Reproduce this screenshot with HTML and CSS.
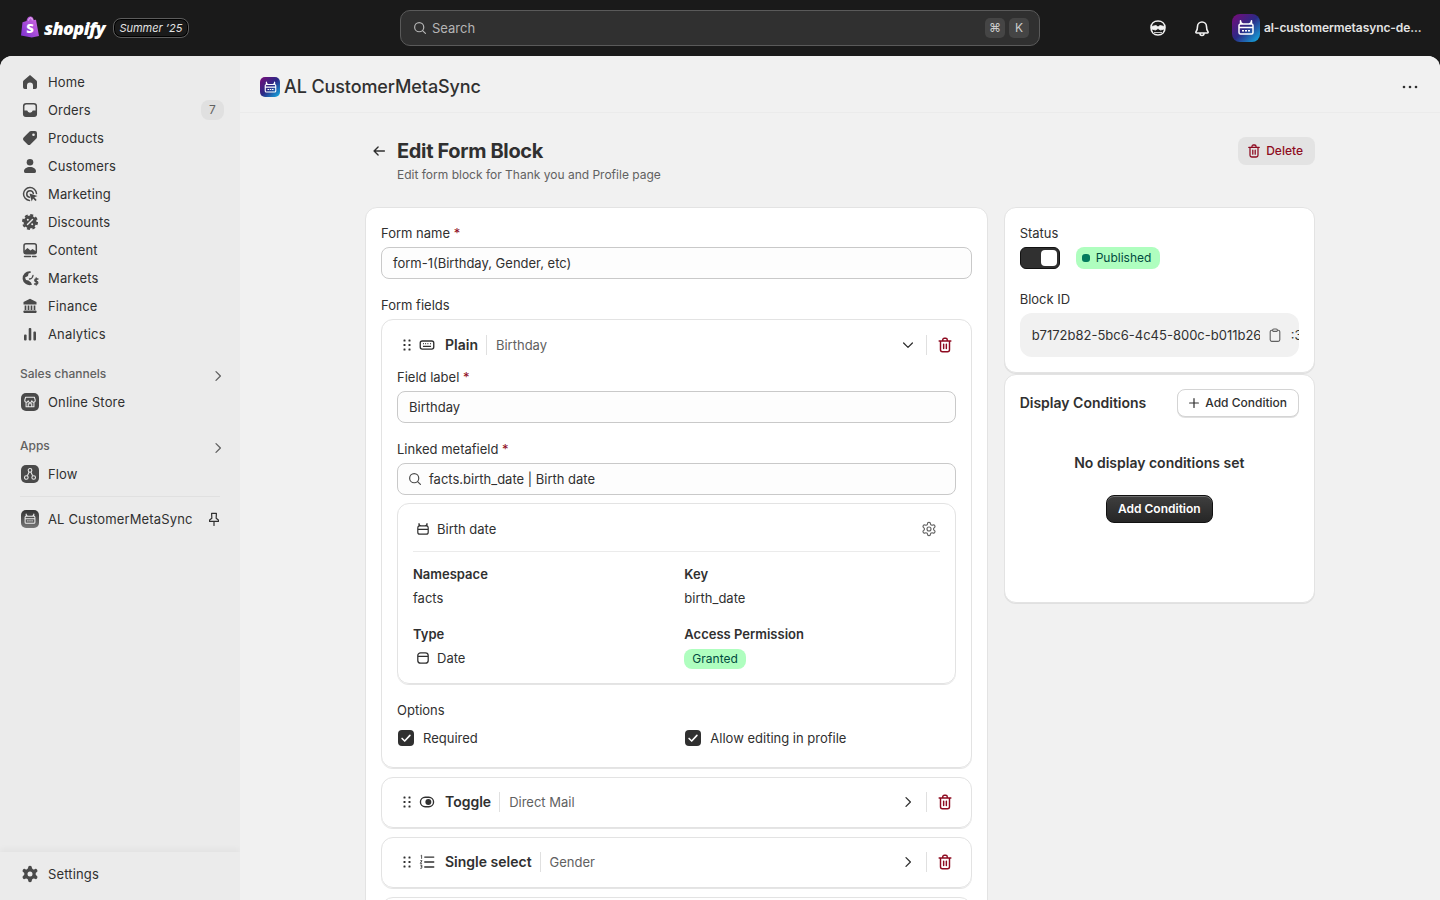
FILE: index.html
```html
<!DOCTYPE html>
<html lang="en">

<head>
    <meta charset="UTF-8">
    <meta name="viewport" content="width=device-width, initial-scale=1.0">
    <title>AL CustomerMetaSync - Edit Form Block</title>
    <link rel="stylesheet" href="styles.css">
</head>

<body>
    <!-- shared icons -->
    <svg class="icon-defs" xmlns="http://www.w3.org/2000/svg">
        <symbol id="i-trash" viewBox="0 0 20 20">
            <path d="M3.500 5.500h13M7.500 5.500V4.200A1.700 1.700 0 0 1 9.200 2.500h1.600a1.700 1.700 0 0 1 1.700 1.700v1.300M5 5.500v9.800A2.200 2.200 0 0 0 7.200 17.500h5.600a2.200 2.200 0 0 0 2.200-2.200V5.500M8.500 9v5M11.500 9v5" fill="none" stroke="currentColor" stroke-width="1.600" stroke-linecap="round" stroke-linejoin="round" />
        </symbol>
        <symbol id="i-grip" viewBox="0 0 10 14">
            <g fill="currentColor">
                <rect x="1.500" y="1.500" width="2" height="2" rx=".5" /><rect x="6.500" y="1.500" width="2" height="2" rx=".5" />
                <rect x="1.500" y="6" width="2" height="2" rx=".5" /><rect x="6.500" y="6" width="2" height="2" rx=".5" />
                <rect x="1.500" y="10.500" width="2" height="2" rx=".5" /><rect x="6.500" y="10.500" width="2" height="2" rx=".5" />
            </g>
        </symbol>
        <symbol id="i-right" viewBox="0 0 20 20">
            <path d="M7.500 4.500 13 10l-5.500 5.500" fill="none" stroke="currentColor" stroke-width="1.600" stroke-linecap="round" stroke-linejoin="round" />
        </symbol>
        <symbol id="i-search" viewBox="0 0 20 20">
            <circle cx="9" cy="9" r="5.700" fill="none" stroke="currentColor" stroke-width="1.500" />
            <path d="m13.200 13.200 3.600 3.600" fill="none" stroke="currentColor" stroke-width="1.500" stroke-linecap="round" />
        </symbol>
        <symbol id="i-date" viewBox="0 0 20 20">
            <path d="M7 3.500h6a3.500 3.500 0 0 1 3.500 3.500v6a3.500 3.500 0 0 1-3.500 3.500H7A3.500 3.500 0 0 1 3.500 13V7A3.500 3.500 0 0 1 7 3.500zM3.500 8h13" fill="none" stroke="currentColor" stroke-width="1.600" />
        </symbol>
        <symbol id="i-birth" viewBox="0 0 20 20">
            <path d="M5 3.200v2.300c0 .3.200.5.500.5h9c.3 0 .5-.2.500-.5V3.200c0 1.800-1.200 2.800-2.500 2.800h-5C6.200 6 5 5 5 3.200zM5.500 6h9a2.500 2.500 0 0 1 2 2.500v5.500a2.500 2.500 0 0 1-2.500 2.500H6A2.500 2.500 0 0 1 3.500 14V8.500A2.500 2.500 0 0 1 5.500 6zM3.500 10.500h13" fill="none" stroke="currentColor" stroke-width="1.500" stroke-linejoin="round" />
        </symbol>
        <symbol id="i-appcal" viewBox="0 0 20 20">
            <path d="M4.500 2.800V5c0 .6.400 1 1 1h9c.6 0 1-.4 1-1V2.800c0 1.900-1.200 3.200-2.700 3.200H7.200C5.700 6 4.500 4.700 4.500 2.800zM4.500 6h11A1.500 1.500 0 0 1 17 7.500v7a1.500 1.500 0 0 1-1.500 1.500h-11A1.500 1.500 0 0 1 3 14.500v-7A1.500 1.500 0 0 1 4.500 6zM3 9.500h14" fill="none" stroke="currentColor" stroke-width="1.500" stroke-linejoin="round" />
            <path d="M6 12.700h8" fill="none" stroke="currentColor" stroke-width="1.400" stroke-dasharray="2 1" />
        </symbol>
        <symbol id="i-gear" viewBox="0 0 24 24">
            <path d="M12.220 2h-.44a2 2 0 0 0-2 2v.18a2 2 0 0 1-1 1.730l-.43.25a2 2 0 0 1-2 0l-.15-.08a2 2 0 0 0-2.730.73l-.22.38a2 2 0 0 0 .73 2.730l.15.1a2 2 0 0 1 1 1.720v.51a2 2 0 0 1-1 1.740l-.15.09a2 2 0 0 0-.73 2.730l.22.38a2 2 0 0 0 2.730.73l.15-.08a2 2 0 0 1 2 0l.43.25a2 2 0 0 1 1 1.730V20a2 2 0 0 0 2 2h.44a2 2 0 0 0 2-2v-.18a2 2 0 0 1 1-1.730l.43-.25a2 2 0 0 1 2 0l.15.08a2 2 0 0 0 2.730-.73l.22-.39a2 2 0 0 0-.73-2.730l-.15-.08a2 2 0 0 1-1-1.740v-.5a2 2 0 0 1 1-1.740l.15-.09a2 2 0 0 0 .73-2.730l-.22-.38a2 2 0 0 0-2.730-.73l-.15.08a2 2 0 0 1-2 0l-.43-.25a2 2 0 0 1-1-1.730V4a2 2 0 0 0-2-2z" fill="none" stroke="currentColor" stroke-width="1.700" />
            <circle cx="12" cy="12" r="3" fill="none" stroke="currentColor" stroke-width="1.700" />
        </symbol>
    </svg>

    <header class="topbar">
        <div class="brand">
            <svg class="bag" viewBox="0 0 20 22" width="20" height="23">
                <defs>
                    <linearGradient id="bagfill" x1="0" y1="1" x2="1" y2="0">
                        <stop offset="0" stop-color="#7b2fd0" />
                        <stop offset="1" stop-color="#d66be0" />
                    </linearGradient>
                </defs>
                <path d="M6.500 5.500C6.800 3 8.300 1 10.500 1c1.800 0 3 1.600 3.300 3.500L16 4.200 19 20.500 11.800 22 1 20l1.500-13.300z" fill="url(#bagfill)" />
                <path d="M8.500 5.200C8.800 3.500 9.500 2.300 10.600 2.300c1 0 1.600 1.100 1.700 2.500" fill="none" stroke="#fff" stroke-width=".9" opacity=".7" />
                <text x="10" y="17.500" class="bag-s">S</text>
            </svg>
            <span class="wordmark">shopify</span>
            <span class="edition">Summer ’25</span>
        </div>
        <div class="search">
            <svg class="ic16" width="16" height="16"><use href="#i-search" /></svg>
            <span class="search-text">Search</span>
            <span class="kbd">⌘</span>
            <span class="kbd">K</span>
        </div>
        <div class="top-right">
            <svg class="top-icon" viewBox="0 0 20 20" width="20" height="20">
                <path d="M10 3c4 0 7 2.500 7 6.500 0 4.500-2.800 7.500-7 7.500s-7-3-7-7.500C3 5.500 6 3 10 3z" fill="none" stroke="currentColor" stroke-width="1.600" />
                <path d="M3.500 8.500 8 7.500l2 1.500 2-1.500 4.500 1v2.500l-4 1-2.500-1.500L7.500 12l-4-1zM6 14.500h8" fill="currentColor" stroke="currentColor" stroke-width=".8" />
            </svg>
            <svg class="top-icon bell" viewBox="0 0 20 20" width="20" height="20">
                <path d="M5.500 8.500a4.500 4.500 0 0 1 9 0c0 3 .6 4.200 1.500 5.200.4.500.1 1.300-.6 1.300H4.600c-.7 0-1-.8-.6-1.300.9-1 1.500-2.200 1.500-5.200zM8 15.500a2 2 0 0 0 4 0" fill="none" stroke="currentColor" stroke-width="1.600" stroke-linejoin="round" />
            </svg>
            <span class="app-tile tile-28"><svg width="20" height="20"><use href="#i-appcal" /></svg></span>
            <span class="shop-name">al-customermetasync-de...</span>
        </div>
    </header>

    <div class="frame">
        <nav class="sidebar">
            <div class="nav-scroll">
                <a class="nav-item">
                    <svg class="nav-icon" viewBox="0 0 20 20"><path d="M10 3 3.600 8.400A1.800 1.800 0 0 0 3 9.800v5.400A1.800 1.800 0 0 0 4.800 17H7v-3.500a3 3 0 0 1 6 0V17h2.200a1.800 1.800 0 0 0 1.800-1.800V9.800a1.800 1.800 0 0 0-.6-1.400z" fill="currentColor" /></svg>
                    Home
                </a>
                <a class="nav-item">
                    <svg class="nav-icon" viewBox="0 0 20 20"><rect x="3.700" y="3.700" width="12.600" height="12.600" rx="2.500" fill="none" stroke="currentColor" stroke-width="1.500" /><path d="M3.500 10.500h3.700a2.900 2.900 0 0 0 5.600 0h3.700V14a2.500 2.500 0 0 1-2.500 2.500H6A2.500 2.500 0 0 1 3.500 14z" fill="currentColor" /></svg>
                    Orders
                    <span class="count">7</span>
                </a>
                <a class="nav-item">
                    <svg class="nav-icon" viewBox="0 0 20 20"><path fill-rule="evenodd" d="M11 3h4a2 2 0 0 1 2 2v4a2 2 0 0 1-.6 1.400l-6 6a2 2 0 0 1-2.800 0l-4-4a2 2 0 0 1 0-2.800l6-6A2 2 0 0 1 11 3zm2.500 5a1.300 1.300 0 1 0 0-2.600 1.300 1.300 0 0 0 0 2.600z" fill="currentColor" /></svg>
                    Products
                </a>
                <a class="nav-item">
                    <svg class="nav-icon" viewBox="0 0 20 20"><circle cx="10" cy="6.300" r="3.300" fill="currentColor" /><path d="M4 15.300c0-2.700 2.600-4.300 6-4.300s6 1.600 6 4.300A1.500 1.500 0 0 1 14.500 17h-9A1.500 1.500 0 0 1 4 15.300z" fill="currentColor" /></svg>
                    Customers
                </a>
                <a class="nav-item">
                    <svg class="nav-icon" viewBox="0 0 20 20"><path d="M16.500 9.500a6.500 6.500 0 1 0-7 7M13.300 9.500a3.300 3.300 0 1 0-3.800 3.700" fill="none" stroke="currentColor" stroke-width="1.500" stroke-linecap="round" /><path d="m9.500 9.500 8 2.500-3.200 1.300 2.400 2.600-1.300 1.200-2.400-2.600-1.300 3z" fill="currentColor" /></svg>
                    Marketing
                </a>
                <a class="nav-item">
                    <svg class="nav-icon" viewBox="0 0 20 20"><circle cx="10" cy="10" r="6.500" fill="currentColor" /><circle cx="10" cy="10" r="7" fill="none" stroke="currentColor" stroke-width="2" stroke-dasharray="3 2.500" /><path d="m12.500 7.500-5 5" stroke="#ebebeb" stroke-width="1.400" stroke-linecap="round" /><circle cx="7.800" cy="7.800" r="1" fill="#ebebeb" /><circle cx="12.200" cy="12.200" r="1" fill="#ebebeb" /></svg>
                    Discounts
                </a>
                <a class="nav-item">
                    <svg class="nav-icon" viewBox="0 0 20 20"><rect x="4" y="3.700" width="12.300" height="10" rx="2" fill="none" stroke="currentColor" stroke-width="1.500" /><path d="M4 11l3.500-3 3 2.500 2-1.500 3.800 2.500v.5a1.700 1.700 0 0 1-1.700 1.700H5.700A1.700 1.700 0 0 1 4 12z" fill="currentColor" /><path d="M4.500 16.500h6M12.500 16.500h3.500" stroke="currentColor" stroke-width="1.400" stroke-linecap="round" /></svg>
                    Content
                </a>
                <a class="nav-item">
                    <svg class="nav-icon" viewBox="0 0 20 20"><path d="M10.500 3.200A7 7 0 1 0 12 16.700L11 14.500l-2.500-2-2.500-.5-1-2.500 3-1.500.5-2.500 2.500-1z" fill="currentColor" /><path d="M13 7.500A4 4 0 0 1 9.500 11M18 11h-2a1.200 1.200 0 0 0 0 2.500h.6a1.200 1.200 0 0 1 0 2.500H14.500M16.200 9.800v7.300" fill="none" stroke="currentColor" stroke-width="1.300" stroke-linecap="round" /></svg>
                    Markets
                </a>
                <a class="nav-item">
                    <svg class="nav-icon" viewBox="0 0 20 20"><path d="M10 2.800 3.500 6v2.500h13V6z" fill="currentColor" /><path d="M5.500 9.500v4.500M8.500 9.500v4.500M11.500 9.500v4.500M14.500 9.500v4.500" stroke="currentColor" stroke-width="1.700" /><rect x="3.500" y="14.500" width="13" height="2.500" rx=".7" fill="currentColor" /></svg>
                    Finance
                </a>
                <a class="nav-item">
                    <svg class="nav-icon" viewBox="0 0 20 20"><rect x="4" y="10.500" width="2.600" height="6" rx="1" fill="currentColor" /><rect x="8.700" y="4" width="2.600" height="12.500" rx="1" fill="currentColor" /><rect x="13.400" y="7.500" width="2.600" height="9" rx="1" fill="currentColor" /></svg>
                    Analytics
                </a>

                <div class="nav-section first">
                    <span>Sales channels</span>
                    <svg class="section-arrow" width="16" height="16"><use href="#i-right" /></svg>
                </div>
                <a class="nav-item">
                    <span class="app-square">
                        <svg viewBox="0 0 16 16" width="14" height="14"><path d="M3 2.500h10l1 3.500a2 2 0 0 1-4 .5 2 2 0 0 1-4 0 2 2 0 0 1-4-.5zM3.500 8v5.500h9V8M6 13.500V10h4v3.500" fill="none" stroke="#ebebeb" stroke-width="1.200" stroke-linejoin="round" /></svg>
                    </span>
                    Online Store
                </a>

                <div class="nav-section">
                    <span>Apps</span>
                    <svg class="section-arrow" width="16" height="16"><use href="#i-right" /></svg>
                </div>
                <a class="nav-item">
                    <span class="app-square">
                        <svg viewBox="0 0 16 16" width="14" height="14"><circle cx="8" cy="3.800" r="2.100" fill="none" stroke="#ebebeb" stroke-width="1.200" /><circle cx="3.800" cy="12" r="2.100" fill="none" stroke="#ebebeb" stroke-width="1.200" /><circle cx="12.200" cy="12" r="2.100" fill="none" stroke="#ebebeb" stroke-width="1.200" /><path d="M7 5.800 5 10M9 5.800l2 4.200" stroke="#ebebeb" stroke-width="1.200" /></svg>
                    </span>
                    Flow
                </a>
                <div class="nav-rule"></div>
                <a class="nav-item">
                    <span class="app-square gradient">
                        <svg width="14" height="14"><use href="#i-appcal" /></svg>
                    </span>
                    AL CustomerMetaSync
                    <svg class="pin" viewBox="0 0 20 20" width="16" height="16"><path d="M7 3h6l-.3 6 2.800 2.200v1.800h-11v-1.800L7.300 9zM10 13v5" fill="none" stroke="currentColor" stroke-width="1.500" stroke-linejoin="round" stroke-linecap="round" /></svg>
                </a>
            </div>
            <div class="nav-footer">
                <a class="nav-item">
                    <svg class="nav-icon" viewBox="0 0 24 24"><path d="M12.200 2h-.4a2 2 0 0 0-2 2v.2a2 2 0 0 1-1 1.700l-.4.300a2 2 0 0 1-2 0l-.2-.1a2 2 0 0 0-2.700.7l-.2.400a2 2 0 0 0 .7 2.700l.2.100a2 2 0 0 1 1 1.700v.5a2 2 0 0 1-1 1.700l-.2.100a2 2 0 0 0-.7 2.700l.2.400a2 2 0 0 0 2.700.7l.2-.1a2 2 0 0 1 2 0l.4.300a2 2 0 0 1 1 1.700v.2a2 2 0 0 0 2 2h.4a2 2 0 0 0 2-2v-.2a2 2 0 0 1 1-1.700l.4-.3a2 2 0 0 1 2 0l.2.100a2 2 0 0 0 2.700-.7l.2-.4a2 2 0 0 0-.7-2.700l-.2-.1a2 2 0 0 1-1-1.700v-.5a2 2 0 0 1 1-1.700l.2-.1a2 2 0 0 0 .7-2.700l-.2-.4a2 2 0 0 0-2.700-.7l-.2.1a2 2 0 0 1-2 0l-.4-.3a2 2 0 0 1-1-1.700V4a2 2 0 0 0-2-2zM12 15a3 3 0 1 1 0-6 3 3 0 0 1 0 6z" fill="currentColor" fill-rule="evenodd" /></svg>
                    Settings
                </a>
            </div>
        </nav>

        <main class="content">
            <div class="app-bar">
                <span class="app-tile tile-20"><svg width="15" height="15"><use href="#i-appcal" /></svg></span>
                <span class="app-title">AL CustomerMetaSync</span>
                <svg class="dots" viewBox="0 0 16 4" width="16" height="4"><circle cx="2" cy="2" r="1.300" /><circle cx="8" cy="2" r="1.300" /><circle cx="14" cy="2" r="1.300" /></svg>
            </div>

            <div class="page">
                <div class="page-head">
                    <svg class="back" viewBox="0 0 20 20" width="18" height="18"><path d="M16 10H4.500M9 5.500 4.500 10 9 14.500" fill="none" stroke="currentColor" stroke-width="1.500" stroke-linecap="round" stroke-linejoin="round" /></svg>
                    <div class="page-titles">
                        <h1>Edit Form Block</h1>
                        <p>Edit form block for Thank you and Profile page</p>
                    </div>
                    <button class="btn-delete"><svg width="16" height="16"><use href="#i-trash" /></svg>Delete</button>
                </div>

                <div class="columns">
                    <section class="card form-card">
                        <label class="label">Form name <em>*</em></label>
                        <div class="input">form-1(Birthday, Gender, etc)</div>

                        <label class="label spaced">Form fields</label>

                        <div class="block open">
                            <div class="block-head">
                                <svg class="grip" width="10" height="14"><use href="#i-grip" /></svg>
                                <svg class="type-icon" viewBox="0 0 20 20" width="18" height="18"><rect x="2.500" y="5.500" width="15" height="9" rx="2.200" fill="none" stroke="currentColor" stroke-width="1.500" /><path d="M5.500 8.500h1M8 8.500h1M10.500 8.500h1M13.500 8.500h1M5.500 11.500h9" stroke="currentColor" stroke-width="1.300" /></svg>
                                <strong>Plain</strong>
                                <span class="sep"></span>
                                <span class="muted">Birthday</span>
                                <svg class="toggle-arrow down" width="16" height="16"><use href="#i-right" /></svg>
                                <span class="sep right"></span>
                                <svg class="trash" width="18" height="18"><use href="#i-trash" /></svg>
                            </div>

                            <label class="label tight">Field label <em>*</em></label>
                            <div class="input">Birthday</div>

                            <label class="label spaced">Linked metafield <em>*</em></label>
                            <div class="input with-icon">
                                <svg width="16" height="16"><use href="#i-search" /></svg>
                                facts.birth_date | Birth date
                            </div>

                            <div class="meta-card">
                                <div class="meta-head">
                                    <svg width="16" height="16"><use href="#i-birth" /></svg>
                                    <span>Birth date</span>
                                    <svg class="meta-gear" width="16" height="16"><use href="#i-gear" /></svg>
                                </div>
                                <div class="meta-grid">
                                    <div>
                                        <h4>Namespace</h4>
                                        <p>facts</p>
                                    </div>
                                    <div>
                                        <h4>Key</h4>
                                        <p>birth_date</p>
                                    </div>
                                    <div>
                                        <h4>Type</h4>
                                        <p class="with-cal"><svg width="16" height="16"><use href="#i-date" /></svg>Date</p>
                                    </div>
                                    <div>
                                        <h4>Access Permission</h4>
                                        <p><span class="badge">Granted</span></p>
                                    </div>
                                </div>
                            </div>

                            <label class="label spaced">Options</label>
                            <div class="options">
                                <div class="check"><span class="box"><svg viewBox="0 0 16 16" width="14" height="14"><path d="m3.500 8.500 3 3 6-6.500" fill="none" stroke="#fff" stroke-width="1.800" stroke-linecap="round" stroke-linejoin="round" /></svg></span>Required</div>
                                <div class="check"><span class="box"><svg viewBox="0 0 16 16" width="14" height="14"><path d="m3.500 8.500 3 3 6-6.500" fill="none" stroke="#fff" stroke-width="1.800" stroke-linecap="round" stroke-linejoin="round" /></svg></span>Allow editing in profile</div>
                            </div>
                        </div>

                        <div class="block collapsed">
                            <div class="block-head">
                                <svg class="grip" width="10" height="14"><use href="#i-grip" /></svg>
                                <svg class="type-icon" viewBox="0 0 20 20" width="18" height="18"><rect x="2.700" y="4.700" width="14.600" height="10.600" rx="5.300" fill="none" stroke="currentColor" stroke-width="1.500" /><circle cx="11.500" cy="10" r="3.300" fill="currentColor" /></svg>
                                <strong>Toggle</strong>
                                <span class="sep"></span>
                                <span class="muted">Direct Mail</span>
                                <svg class="toggle-arrow" width="16" height="16"><use href="#i-right" /></svg>
                                <span class="sep right"></span>
                                <svg class="trash" width="18" height="18"><use href="#i-trash" /></svg>
                            </div>
                        </div>

                        <div class="block collapsed">
                            <div class="block-head">
                                <svg class="grip" width="10" height="14"><use href="#i-grip" /></svg>
                                <svg class="type-icon" viewBox="0 0 20 20" width="18" height="18"><path d="M7.500 4.500h10M7.500 10h10M7.500 15.500h10" stroke="currentColor" stroke-width="1.500" stroke-linecap="round" /><path d="M3 3l1-.5v4M2.500 8.500h2l-2 3h2M2.500 13.500h2l-1 1.500h1l-.5 2h-1.500" fill="none" stroke="currentColor" stroke-width=".9" /></svg>
                                <strong>Single select</strong>
                                <span class="sep"></span>
                                <span class="muted">Gender</span>
                                <svg class="toggle-arrow" width="16" height="16"><use href="#i-right" /></svg>
                                <span class="sep right"></span>
                                <svg class="trash" width="18" height="18"><use href="#i-trash" /></svg>
                            </div>
                        </div>

                        <div class="block collapsed"></div>
                    </section>

                    <aside class="side">
                        <section class="card status-card">
                            <label class="label">Status</label>
                            <div class="status-row">
                                <span class="switch"><span class="knob"></span></span>
                                <span class="badge published"><i></i>Published</span>
                            </div>
                            <label class="label block-id-label">Block ID</label>
                            <div class="block-id">
                                <span class="id-text">b7172b82-5bc6-4c45-800c-b011b26c38ce</span>
                                <svg width="16" height="16" viewBox="0 0 20 20"><path d="M7 4H6a2 2 0 0 0-2 2v10a2 2 0 0 0 2 2h8a2 2 0 0 0 2-2V6a2 2 0 0 0-2-2h-1M8.500 2.500h3A1.500 1.500 0 0 1 13 4v.5a1 1 0 0 1-1 1H8a1 1 0 0 1-1-1V4a1.500 1.500 0 0 1 1.500-1.500z" fill="none" stroke="currentColor" stroke-width="1.400" /></svg>
                                <span class="id-extra">:3</span>
                            </div>
                        </section>

                        <section class="card cond-card">
                            <div class="cond-head">
                                <strong>Display Conditions</strong>
                                <button class="btn-plain"><svg viewBox="0 0 16 16" width="14" height="14"><path d="M8 3v10M3 8h10" stroke="currentColor" stroke-width="1.400" stroke-linecap="round" /></svg>Add Condition</button>
                            </div>
                            <div class="cond-empty">
                                <p>No display conditions set</p>
                                <button class="btn-dark">Add Condition</button>
                            </div>
                        </section>
                    </aside>
                </div>
            </div>
        </main>
    </div>
</body>

</html>
```

FILE: styles.css
```css
* {
    box-sizing: border-box;
}

html,
body {
    height: 100%;
}

body {
    margin: 0;
    height: 900px;
    overflow: hidden;
    background-color: #1a1a1a;
    font-family: 'Inter', 'Liberation Sans', sans-serif;
    font-size: 13px;
    line-height: 20px;
    font-weight: 400;
    color: #303030;
}

.icon-defs {
    display: none;
}

/* top bar */
.topbar {
    height: 56px;
    display: grid;
    grid-template-columns: 400px 640px 1fr;
    align-items: center;
    color: #e3e3e3;
}

.brand {
    display: flex;
    align-items: center;
    padding-left: 20px;
}

.bag {
    margin-top: -3px;
}

.bag-s {
    font-family: 'Open Sans', sans-serif;
    font-weight: 800;
    font-size: 13px;
    fill: #fff;
    text-anchor: middle;
}

.wordmark {
    font-family: 'Open Sans', sans-serif;
    font-style: italic;
    font-weight: 800;
    font-size: 18px;
    letter-spacing: -0.6px;
    color: #fff;
    margin-left: 4px;
}

.edition {
    margin-left: 8px;
    height: 20px;
    width: 76px;
    border: 1px solid #5c5c5c;
    border-radius: 8px;
    box-shadow: inset 0 0 0 1px #000;
    font-style: italic;
    font-size: 11px;
    line-height: 18px;
    text-align: center;
    color: #e3e3e3;
}

.search {
    height: 36px;
    display: flex;
    align-items: center;
    gap: 4px;
    padding: 0 10px 0 11px;
    background-color: #303030;
    border: 1px solid #5a5a5a;
    border-radius: 10px;
    color: #b5b5b5;
}

.search-text {
    flex: 1;
    font-size: 13px;
}

.kbd {
    width: 20px;
    height: 20px;
    border-radius: 5px;
    background-color: #454545;
    font-size: 12px;
    text-align: center;
    line-height: 20px;
    color: #cccccc;
}

.top-right {
    display: flex;
    align-items: center;
    padding-left: 108px;
}

.top-icon {
    color: #f1f1f1;
}

.bell {
    margin-left: 24px;
}

.app-tile {
    display: inline-flex;
    align-items: center;
    justify-content: center;
    color: #fff;
    background: linear-gradient(135deg, #7a0a78 0%, #2b2a86 50%, #12b3e6 100%);
}

.tile-28 {
    width: 28px;
    height: 28px;
    border-radius: 8px;
    margin-left: 20px;
}

.tile-20 {
    width: 20px;
    height: 20px;
    border-radius: 5px;
}

.shop-name {
    margin-left: 4px;
    font-weight: 600;
    font-size: 12px;
    letter-spacing: -0.08px;
    white-space: nowrap;
    color: #e3e3e3;
}

/* frame under the top bar */
.frame {
    height: 844px;
    display: flex;
    border-radius: 12px 12px 0 0;
    overflow: hidden;
    background-color: #f1f1f1;
}

.sidebar {
    width: 240px;
    flex: none;
    display: flex;
    flex-direction: column;
    justify-content: space-between;
    background-color: #ebebeb;
}

.nav-scroll {
    padding: 12px 12px 0;
}

.nav-item {
    height: 28px;
    display: flex;
    align-items: center;
    gap: 8px;
    padding: 0 4px 0 8px;
    letter-spacing: 0.15px;
    color: #303030;
}

.nav-icon {
    width: 20px;
    height: 20px;
    flex: none;
    color: #4a4a4a;
}

.count {
    margin-left: auto;
    width: 23px;
    height: 20px;
    border-radius: 8px;
    background-color: #e0e0e0;
    font-size: 12px;
    text-align: center;
    color: #616161;
}

.nav-section {
    height: 28px;
    margin-top: 16px;
    display: flex;
    align-items: center;
    justify-content: space-between;
    padding: 0 2px 0 8px;
    font-size: 12px;
    font-weight: 500;
    color: #616161;
}

.nav-section.first {
    margin-top: 12px;
}

.section-arrow {
    margin-top: 4px;
    color: #616161;
}

.app-square {
    width: 18px;
    height: 18px;
    margin: 0 1px;
    flex: none;
    display: flex;
    align-items: center;
    justify-content: center;
    border-radius: 5px;
    background-color: #4a4a4a;
    color: #ebebeb;
}

.app-square.gradient {
    background: linear-gradient(180deg, #333 0%, #777 100%);
}

.nav-rule {
    height: 1px;
    margin: 8px;
    background-color: #e0e0e0;
}

.pin {
    margin-left: auto;
    margin-right: 2px;
    color: #303030;
}

.nav-footer {
    height: 48px;
    padding: 8px 12px;
    box-shadow: 0 -3px 6px rgba(0, 0, 0, 0.04);
}

/* content */
.content {
    flex: 1;
    min-width: 0;
    background-color: #f1f1f1;
}

.app-bar {
    height: 57px;
    display: flex;
    align-items: center;
    padding: 6px 22px 0 20px;
    border-bottom: 1px solid #ebebeb;
}

.app-title {
    margin-left: 4px;
    font-size: 18px;
    font-weight: 500;
    letter-spacing: -0.1px;
    color: #303030;
}

.dots {
    margin-left: auto;
    fill: #303030;
}

.page {
    width: 950px;
    margin-left: 125px;
    padding-top: 24px;
}

.page-head {
    display: flex;
    align-items: flex-start;
    margin-bottom: 22px;
}

.back {
    width: 18px;
    margin: 5px 9px 0 5px;
    color: #303030;
}

.page-titles {
    flex: 1;
}

h1 {
    margin: 0;
    font-size: 20px;
    line-height: 28px;
    font-weight: 650;
    letter-spacing: -0.35px;
    color: #303030;
}

.page-titles p {
    margin: 0;
    font-size: 12px;
    line-height: 20px;
    color: #616161;
}

.btn-delete {
    height: 28px;
    display: flex;
    align-items: center;
    gap: 4px;
    padding: 0 12px 0 8px;
    border: none;
    border-radius: 8px;
    background-color: #e3e3e3;
    font: inherit;
    font-size: 12px;
    font-weight: 500;
    color: #8e0b21;
}

.columns {
    display: grid;
    grid-template-columns: minmax(0, 2fr) minmax(0, 1fr);
    gap: 16px;
    align-items: start;
}

.card {
    background-color: #fff;
    border: 1px solid #e3e3e3;
    border-radius: 12px;
    padding: 15px;
    box-shadow: 0 1px 0 rgba(0, 0, 0, 0.07);
}

.label {
    display: block;
    line-height: 20px;
    margin-bottom: 4px;
    color: #303030;
}

.label em {
    font-style: normal;
    color: #8e0b21;
}

.label.spaced {
    margin-top: 16px;
}

.label.tight {
    margin-top: 10px;
}

.input {
    height: 32px;
    display: flex;
    align-items: center;
    gap: 6px;
    padding: 0 11px;
    background-color: #fdfdfd;
    border: 1px solid #c9c9c9;
    border-radius: 8px;
    color: #303030;
}

.input.with-icon {
    padding-left: 9px;
}

.input svg {
    color: #4a4a4a;
}

.block {
    padding: 12px 15px 19px;
    border: 1px solid #e3e3e3;
    border-radius: 12px;
    box-shadow: 0 1px 0 rgba(0, 0, 0, 0.1);
}

.block.open {
    padding-top: 13px;
}

.block.collapsed {
    margin-top: 9px;
    padding-bottom: 13px;
    min-height: 51px;
}

.block-head {
    height: 24px;
    display: flex;
    align-items: center;
    padding-right: 2px;
}

.grip {
    margin-left: 5px;
    color: #303030;
}

.type-icon {
    margin-left: 6px;
    color: #303030;
}

.block-head strong {
    margin-left: 9px;
    font-size: 14px;
    font-weight: 600;
    color: #303030;
}

.sep {
    width: 1px;
    height: 20px;
    margin: 0 9px 0 8px;
    background-color: #e0e0e0;
}

.sep.right {
    margin: 0 9px 0 10px;
}

.muted {
    color: #616161;
}

.toggle-arrow {
    margin-left: auto;
    color: #303030;
}

.toggle-arrow.down {
    transform: rotate(90deg);
}

.trash {
    color: #8e0b21;
}

.meta-card {
    margin-top: 8px;
    padding: 0 15px 15px;
    border: 1px solid #e3e3e3;
    border-radius: 12px;
    box-shadow: 0 1px 0 rgba(0, 0, 0, 0.1);
}

.meta-head {
    display: flex;
    align-items: center;
    gap: 6px;
    padding: 15px 3px 12px 2px;
    border-bottom: 1px solid #ebebeb;
}

.meta-head span {
    color: #303030;
}

.meta-gear {
    margin-left: auto;
    color: #616161;
}

.meta-grid {
    display: grid;
    grid-template-columns: 1fr 1fr;
    column-gap: 16px;
    row-gap: 16px;
    padding-top: 12px;
}

.meta-grid h4 {
    margin: 0 0 4px;
    font-size: 13px;
    line-height: 20px;
    font-weight: 600;
    color: #303030;
}

.meta-grid p {
    margin: 0;
    height: 20px;
    color: #303030;
}

.with-cal {
    display: flex;
    align-items: center;
    gap: 6px;
    padding-left: 2px;
}

.badge {
    display: inline-flex;
    align-items: center;
    height: 20px;
    padding: 0 8px;
    border-radius: 8px;
    background-color: #affebf;
    font-size: 12px;
    color: #014b40;
}

.options {
    display: grid;
    grid-template-columns: 1fr 1fr;
    column-gap: 16px;
    margin-top: 8px;
}

.check {
    display: flex;
    align-items: center;
    gap: 9px;
}

.box {
    width: 16px;
    height: 16px;
    margin-left: 1px;
    display: flex;
    align-items: center;
    justify-content: center;
    border-radius: 4px;
    background-color: #303030;
}

/* right column */
.side {
    display: flex;
    flex-direction: column;
    gap: 1px;
}

.status-card {
    height: 166px;
}

.status-row {
    display: flex;
    align-items: center;
    gap: 16px;
    height: 22px;
}

.switch {
    width: 40px;
    height: 22px;
    padding: 2px;
    display: flex;
    justify-content: flex-end;
    background-color: #303030;
    border: 1px solid #111;
    border-radius: 6px;
}

.knob {
    width: 16px;
    height: 16px;
    border-radius: 4px;
    background-color: #fff;
}

.badge.published {
    height: 22px;
    width: 84px;
    gap: 6px;
    padding: 0 6px;
}

.badge.published i {
    width: 8px;
    height: 8px;
    border-radius: 3px;
    background-color: #047b5d;
}

.block-id-label {
    margin-top: 20px;
}

.block-id {
    height: 44px;
    display: flex;
    align-items: center;
    padding-left: 12px;
    overflow: hidden;
    background-color: #f1f1f1;
    border-radius: 12px;
    white-space: nowrap;
    color: #303030;
}

.id-text {
    width: 228px;
    flex: none;
    overflow: hidden;
}

.block-id svg {
    flex: none;
    margin-left: 7px;
    color: #616161;
}

.id-extra {
    margin-left: 8px;
}

.cond-card {
    height: 229px;
    padding-top: 14px;
}

.cond-head {
    height: 28px;
    display: flex;
    align-items: center;
    justify-content: space-between;
}

.cond-head strong {
    font-size: 14px;
    font-weight: 600;
}

.btn-plain {
    height: 28px;
    display: flex;
    align-items: center;
    gap: 4px;
    padding: 0 11px 0 9px;
    background-color: #fff;
    border: 1px solid #d4d4d4;
    border-radius: 8px;
    box-shadow: 0 1px 0 rgba(0, 0, 0, 0.12);
    font: inherit;
    font-size: 12px;
    font-weight: 500;
    color: #303030;
}

.cond-empty {
    display: flex;
    flex-direction: column;
    align-items: center;
    padding-top: 36px;
}

.cond-empty p {
    margin: 0 0 22px;
    font-size: 14px;
    font-weight: 600;
    color: #303030;
}

.btn-dark {
    width: 107px;
    height: 28px;
    border: 1px solid #111;
    border-radius: 8px;
    background: linear-gradient(180deg, #3f3f3f, #262626);
    box-shadow: inset 0 1px 0 rgba(255, 255, 255, 0.25);
    font: inherit;
    font-size: 12px;
    font-weight: 600;
    color: #fff;
}
```
